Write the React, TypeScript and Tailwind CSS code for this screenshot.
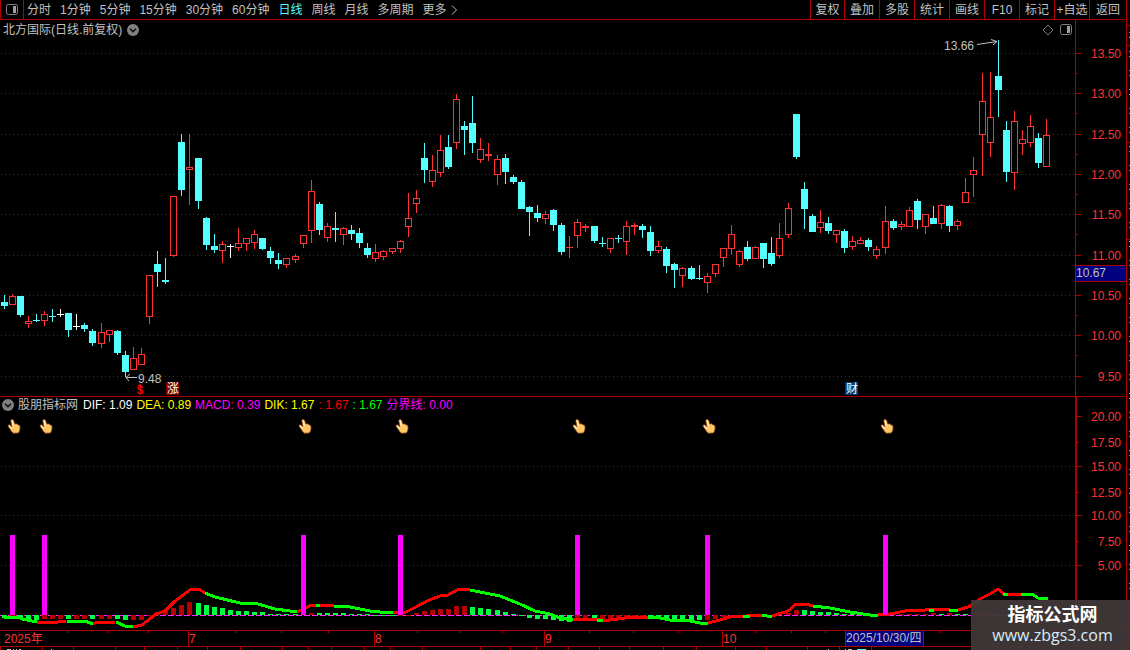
import React from 'react';
import clsx from 'clsx';

type Tone = 'up' | 'down' | 'flat';
type Candle = [string, number, number, number, number];

// [tone, high, body top, body bottom, low]  r = up, c = down, w = unchanged
const candles: Candle[] = [
  ['c', 295, 302, 306, 309], ['r', 294, 296, 305, 305], ['c', 296, 296, 315, 317], ['r', 316, 321, 324, 328],
  ['c', 314, 320, 321, 322], ['r', 311, 314, 321, 326], ['c', 309, 316, 317, 322], ['w', 309, 314, 315, 317],
  ['c', 313, 313, 330, 337], ['w', 314, 326, 327, 330], ['c', 323, 325, 329, 332], ['c', 329, 331, 343, 346],
  ['r', 323, 332, 344, 348], ['r', 330, 330, 335, 342], ['c', 330, 331, 353, 355], ['c', 351, 355, 372, 377],
  ['r', 347, 358, 370, 370], ['r', 348, 354, 365, 365], ['r', 275, 275, 317, 324], ['c', 251, 264, 272, 287],
  ['c', 258, 280, 282, 284], ['r', 196, 196, 256, 257], ['c', 134, 142, 190, 196], ['r', 134, 167, 170, 205],
  ['c', 158, 158, 201, 209], ['c', 217, 218, 245, 250], ['c', 234, 246, 250, 253], ['r', 241, 244, 251, 263],
  ['w', 244, 246, 247, 258], ['r', 228, 243, 248, 251], ['r', 238, 238, 244, 251], ['r', 230, 234, 243, 249],
  ['c', 238, 238, 249, 250], ['c', 247, 251, 258, 264], ['c', 253, 260, 264, 269], ['r', 258, 258, 265, 268],
  ['r', 254, 256, 260, 263], ['r', 235, 235, 244, 248], ['r', 180, 191, 231, 243], ['c', 202, 204, 230, 235],
  ['r', 223, 226, 238, 242], ['c', 212, 228, 230, 242], ['r', 227, 228, 235, 245], ['c', 225, 230, 234, 240],
  ['c', 228, 233, 243, 248], ['c', 243, 248, 255, 258], ['r', 244, 252, 259, 262], ['r', 250, 251, 257, 260],
  ['r', 248, 248, 252, 254], ['r', 240, 241, 249, 253], ['r', 193, 218, 227, 237], ['r', 190, 198, 204, 213],
  ['c', 143, 158, 170, 183], ['r', 155, 170, 182, 187], ['r', 135, 150, 173, 177], ['c', 135, 147, 167, 169],
  ['r', 94, 99, 143, 149], ['c', 121, 126, 130, 155], ['c', 96, 123, 143, 153], ['r', 138, 149, 160, 163],
  ['r', 143, 154, 156, 161], ['r', 155, 159, 175, 185], ['c', 154, 158, 172, 184], ['c', 175, 177, 182, 184],
  ['c', 180, 182, 209, 209], ['c', 206, 207, 212, 236], ['c', 205, 213, 218, 222], ['r', 211, 214, 219, 224],
  ['c', 209, 210, 225, 231], ['c', 223, 225, 252, 255], ['r', 236, 247, 248, 258], ['r', 219, 222, 236, 248],
  ['r', 224, 226, 228, 232], ['c', 226, 226, 241, 243], ['c', 237, 243, 244, 247], ['r', 238, 238, 249, 253],
  ['c', 235, 238, 239, 243], ['r', 221, 226, 242, 255], ['r', 223, 225, 227, 235], ['c', 224, 226, 230, 238],
  ['c', 226, 232, 251, 256], ['r', 241, 246, 251, 253], ['c', 247, 249, 266, 273], ['c', 263, 264, 270, 288],
  ['r', 267, 268, 276, 287], ['c', 266, 268, 279, 280], ['c', 265, 278, 279, 280], ['r', 273, 276, 283, 293],
  ['r', 264, 264, 274, 277], ['r', 248, 248, 258, 267], ['r', 225, 234, 249, 255], ['r', 250, 251, 265, 267],
  ['c', 241, 247, 259, 261], ['r', 246, 247, 259, 259], ['c', 243, 243, 259, 268], ['c', 237, 253, 264, 266],
  ['r', 223, 238, 256, 258], ['r', 203, 208, 235, 238], ['c', 114, 114, 157, 159], ['c', 182, 189, 209, 229],
  ['c', 214, 216, 232, 232], ['r', 210, 222, 228, 233], ['c', 217, 223, 231, 234], ['r', 230, 230, 235, 243],
  ['c', 229, 231, 248, 253], ['r', 236, 241, 247, 250], ['r', 237, 240, 244, 244], ['c', 238, 240, 247, 251],
  ['r', 246, 249, 256, 259], ['r', 206, 221, 248, 254], ['c', 219, 221, 228, 230], ['r', 221, 224, 227, 230],
  ['r', 207, 210, 227, 227], ['c', 199, 201, 220, 229], ['r', 214, 214, 227, 234], ['c', 206, 218, 224, 224],
  ['r', 204, 205, 224, 229], ['c', 205, 206, 226, 232], ['r', 219, 221, 226, 230], ['r', 178, 192, 203, 203],
  ['r', 157, 170, 175, 197], ['r', 73, 101, 135, 176], ['r', 72, 117, 143, 157], ['c', 40, 76, 90, 117],
  ['c', 121, 130, 172, 182], ['r', 111, 121, 173, 190], ['r', 130, 139, 144, 155], ['r', 115, 126, 143, 147],
  ['c', 133, 138, 163, 168], ['r', 119, 135, 167, 167],
];

// one entry per candle, "g" or "r" followed by the bar height, negative hangs below zero
const macd = (
  'g-3 r-3 g-4 g-4 g-5 r-4 r-4 r-4 g-4 r-4 r-4 g-4 r-4 r-4 g-4 g-5 r-5 r-5 r-1 r3 r4 r7 r10 r13 ' +
  'g12 g10 g8 g7 g5 g4 g4 g3 g3 g1 g1 g1 g1 r1 r2 g2 g2 g2 g2 g1 g1 g1 g-1 g-1 g-1 r-1 r-1 r2 r4 r5 r6 r6 r9 r9 ' +
  'g8 g7 g6 g5 g3 g1 g-1 g-3 g-4 g-4 g-5 g-6 g-7 r-6 r-5 g-5 r-6 r-5 r-5 r-4 r-3 r-3 g-3 g-3 g-4 g-5 g-5 g-6 g-5 ' +
  'r-5 r-4 r-2 r-1 r-1 g-1 r1 g1 g-1 r1 r2 r5 g5 g4 g3 g3 g2 g1 g1 g1 g-1 g-1 r1 r1 r1 r1 r1 r1 r2 g1 r2 g1 g1 r2 r3'
).split(' ');

const difLine: [Tone, string][] = [
  ['down', '4,617 18,617 22,619 37,622'],
  ['up', '37,622 58,622 60,621 66,621'],
  ['down', '67,621 85,621 93,624'],
  ['up', '93,624 97,622 115,622'],
  ['down', '116,622 125,626 134,627'],
  ['up', '133,627 142,625 156,614 165,611 174,602 190,590 199,589 205,593'],
  ['down', '205,593 215,597 240,603 258,604 275,609 290,611 297,612'],
  ['up', '297,612 303,609 312,605 334,606'],
  ['down', '316,605 320,605'],
  ['down', '334,606 350,607 370,611 380,612 394,612'],
  ['up', '393,612 406,612 416,607 427,601 440,596 448,595 457,590 470,589'],
  ['down', '470,590 475,591 500,596 520,604 535,611 550,614 560,618 573,620'],
  ['up', '573,620 598,619 603,621 625,618 648,617'],
  ['down', '597,620 603,621'],
  ['down', '648,617 660,618 670,620 690,621 700,623 708,623'],
  ['up', '708,623 720,620 730,617 762,615'],
  ['down', '743,616 750,617'],
  ['down', '762,615 772,617'],
  ['up', '772,616 788,611 796,604 806,604 813,606'],
  ['down', '813,606 830,608 850,612 870,615 878,616'],
  ['up', '878,615 890,614 905,611 925,610 945,609 950,610 958,610 971,606 980,599 990,594 998,589 1004,594 1022,594'],
  ['down', '929,610 934,610'],
  ['down', '949,610 958,611'],
  ['down', '1003,594 1008,594'],
  ['down', '1021,594 1032,594 1038,598 1048,598'],
];

const signalBars = [1, 5, 37, 49, 71, 87, 109];

const priceScale = [
  { y: 53, label: '13.50' }, { y: 93, label: '13.00' }, { y: 134, label: '12.50' },
  { y: 174, label: '12.00' }, { y: 214, label: '11.50' }, { y: 255, label: '11.00' },
  { y: 295, label: '10.50' }, { y: 335, label: '10.00' }, { y: 376, label: '9.50' },
];

const indicatorScale = [
  { y: 416, label: '20.00' }, { y: 442, label: '17.50' }, { y: 466, label: '15.00' },
  { y: 492, label: '12.50' }, { y: 515, label: '10.00' }, { y: 541, label: '7.50' },
  { y: 565, label: '5.00' },
];

const periods = ['分时', '1分钟', '5分钟', '15分钟', '30分钟', '60分钟', '日线', '周线', '月线', '多周期'];
const tools = ['复权', '叠加', '多股', '统计', '画线', 'F10', '标记', '+自选', '返回'];

const readings = [
  { text: 'DIF: 1.09', color: 'text-white' },
  { text: 'DEA: 0.89', color: 'text-[#ffff00]' },
  { text: 'MACD: 0.39', color: 'text-[#ff00ff]' },
  { text: 'DIK: 1.67', color: 'text-[#ffff00]' },
  { text: ': 1.67', color: 'text-[#ff0000]' },
  { text: ': 1.67', color: 'text-[#00ff00]' },
  { text: '分界线: 0.00', color: 'text-[#ff00ff]' },
];

const months = [
  { x: 188, label: '7' }, { x: 374, label: '8' }, { x: 544, label: '9' }, { x: 722, label: '10' },
];
const weekTicks = [67, 108, 148, 235, 281, 328, 417, 459, 502, 589, 633, 678, 756, 791, 825, 940];
const footerTicks = [0, 42, 73, 115, 144, 177, 207, 240, 282, 308, 331, 364, 390, 422, 480, 510, 536, 568, 599, 629, 663, 696, 735, 766, 807, 839, 871];

const candleX = (i: number) => Math.floor(4.037 + i * 8.08264);

const PanelIcon = () => (
  <svg width="13" height="12" viewBox="0 0 13 12" className="block">
    <rect x="0.5" y="0.5" width="11" height="10" rx="2" fill="none" stroke="#808080" />
    <rect x="7" y="2" width="3" height="7" fill="#a0a0a0" />
  </svg>
);

const ChevronBadge = () => (
  <svg width="12" height="12" viewBox="0 0 12 12" className="block">
    <circle cx="6" cy="6" r="6" fill="#808080" />
    <path d="M3 4.8 L6 7.6 L9 4.8" fill="none" stroke="#101010" strokeWidth="1.5" />
  </svg>
);

const Hand = ({ x, y }: { x: number; y: number }) => (
  <g transform={`translate(${x} ${y})`}>
    <path
      d="M5 1.5C6 1.5 6.6 2 6.9 3L7.8 6L9.5 5.8L11 6.8L12.3 7.3C13 8 13.2 9 13 10.5C12.9 12 12.4 13.5 11.3 15L6.3 15.2C4.5 14 3.2 11.2 1.3 8.6C0.6 7.4 1.6 6.4 2.7 7.1L4.8 8.8L3.9 3.2C3.7 2.2 4.1 1.5 5 1.5Z"
      fill="#ffc864"
      stroke="#8a4413"
      strokeWidth="0.8"
    />
    <path d="M5 2.4L6.4 8M2 7.7L4.6 10.6" stroke="#fff3dc" strokeWidth="1.1" fill="none" />
  </g>
);

const Grid = ({ rows }: { rows: number[] }) => (
  <>
    {rows.map((y) => (
      <line key={y} x1="1" x2="100%" y1={y + 0.5} y2={y + 0.5} stroke="#a80000" strokeDasharray="1 3" />
    ))}
  </>
);

const CandleShape = ({ index, candle }: { index: number; candle: Candle }) => {
  const [tone, high, top, bottom, low] = candle;
  const x = candleX(index);
  const hollow = tone === 'r' && bottom - top > 2;
  const color = tone === 'r' ? '#ff3232' : tone === 'c' ? '#54ffff' : '#ffffff';
  return (
    <g fill={color}>
      {top > high && <rect x={x} y={high} width="1" height={top - high} />}
      {low > bottom && <rect x={x} y={bottom} width="1" height={low - bottom} />}
      {hollow ? (
        <rect x={x - 2.5} y={top + 0.5} width="6" height={bottom - top - 1} fill="#000000" stroke={color} />
      ) : (
        <rect x={x - 3} y={top} width="7" height={bottom - top} />
      )}
    </g>
  );
};

const Toolbar = () => (
  <header className="flex h-5 items-stretch justify-between border-b border-[#b00000]">
    <div className="flex items-center">
      <button aria-label="面板" className="flex h-full w-6 items-center justify-center border-x border-[#b00000]">
        <PanelIcon />
      </button>
      <nav className="flex items-center gap-[9px] pl-[3px]">
        {periods.map((p) => (
          <button key={p} className={clsx('whitespace-nowrap', p === '日线' ? 'text-[#54ffff]' : 'text-[#c0c0c0]')}>
            {p}
          </button>
        ))}
        <button className="flex items-center gap-1 whitespace-nowrap">
          更多
          <svg width="7" height="10" viewBox="0 0 7 10">
            <path d="M1 0.5L5.5 5L1 9.5" fill="none" stroke="#c0c0c0" />
          </svg>
        </button>
      </nav>
    </div>
    <div className="flex">
      {tools.map((t) => (
        <button
          key={t}
          className="w-[35px] whitespace-nowrap border-l border-[#b00000] text-center first:w-[34px] last:w-[37px]"
        >
          {t}
        </button>
      ))}
    </div>
  </header>
);

const PricePanel = () => (
  <section className="flex border-b border-[#b00000]">
    <div className="min-w-0 flex-1">
      <div className="flex h-5 items-center justify-between pl-[3px] pr-[2px]">
        <h1 className="flex items-center gap-[5px]">
          北方国际(日线.前复权)
          <ChevronBadge />
        </h1>
        <div className="flex items-center gap-[6px]">
          <svg width="12" height="12" viewBox="0 0 12 12">
            <path d="M6 1L11 6L6 11L1 6Z" fill="none" stroke="#808080" />
          </svg>
          <PanelIcon />
        </div>
      </div>
      <svg className="block h-[356px] w-full overflow-visible" role="img" aria-label="日线 K线图">
        <g transform="translate(0 -40)">
          <Grid rows={priceScale.map((p) => p.y)} />
          {candles.map((c, i) => (
            <CandleShape key={i} index={i} candle={c} />
          ))}
          {/* high and low callouts */}
          <g fill="none" stroke="#c0c0c0">
            <path d="M977 44.5L997 41.5M991 39.5L997 41.5L993 45" />
            <path d="M137 377.5H126M130 374L126 377.5L129 381" />
          </g>
          <g fill="#c0c0c0">
            <text x="944" y="50">13.66</text>
            <text x="138" y="383">9.48</text>
          </g>
          {/* event markers */}
          <text x="137" y="394" fill="#ff0000" fontSize="11" fontWeight="bold">$</text>
          <path d="M137 386L140 384L143 386Z" fill="#ff0000" />
          <rect x="166" y="382" width="13" height="13" fill="#800000" />
          <text x="167" y="393" fill="#ffffff">涨</text>
          <rect x="845" y="382" width="13" height="13" fill="#003c78" />
          <text x="846" y="393" fill="#ffffff">财</text>
        </g>
      </svg>
    </div>
    <svg className="block h-[376px] w-[51px] shrink-0 border-l border-[#b00000]">
      <g transform="translate(0 -20)">
        {priceScale.map((p) => (
          <React.Fragment key={p.label}>
            <rect x="0" y={p.y} width="5" height="1" fill="#b00000" />
            <rect x="0" y={p.y + 20} width="2" height="1" fill="#b00000" />
            <text x="45" y={p.y + 5} textAnchor="end" fill="#ff3232">{p.label}</text>
          </React.Fragment>
        ))}
        <rect x="0" y="265" width="50" height="17" fill="#b00000" />
        <rect x="0" y="266" width="50" height="15" fill="#000080" />
        <text x="0" y="277" fill="#c0c0c0">10.67</text>
      </g>
    </svg>
  </section>
);

const IndicatorPanel = () => (
  <section className="flex border-b border-[#b00000]">
    <div className="min-w-0 flex-1">
      <div className="flex h-4 items-center gap-1 whitespace-nowrap pl-[2px]">
        <ChevronBadge />
        <h2 className="mr-px">股朋指标网</h2>
        {readings.map((r, i) => (
          <span key={i} className={r.color}>{r.text}</span>
        ))}
      </div>
      <svg className="block h-[217px] w-full" role="img" aria-label="股朋指标网">
        <g transform="translate(0 -413)">
          <Grid rows={[466, 515, 565]} />
          <line x1="0" x2="100%" y1="615.5" y2="615.5" stroke="#ff28ff" strokeDasharray="6 2" />
          {macd.map((m, i) => {
            const h = Number(m.slice(1));
            return (
              <rect
                key={i}
                x={candleX(i) - 2}
                y={h > 0 ? 615 - h : 615}
                width="5"
                height={Math.abs(h)}
                fill={m[0] === 'g' ? '#00ff40' : '#b40000'}
              />
            );
          })}
          {difLine.map(([tone, points], i) => (
            <polyline
              key={i}
              points={points}
              fill="none"
              stroke={tone === 'up' ? '#ff0000' : '#00ff00'}
              strokeWidth="3"
              strokeLinejoin="round"
              shapeRendering="crispEdges"
            />
          ))}
          {signalBars.map((i) => (
            <React.Fragment key={i}>
              <rect x={candleX(i) - 2} y="535" width="5" height="80" fill="#ff00ff" />
              <Hand x={candleX(i) - 5} y={418} />
            </React.Fragment>
          ))}
        </g>
      </svg>
    </div>
    <svg className="block h-[233px] w-[51px] shrink-0 border-l-2 border-[#b00000]">
      <g transform="translate(0 -397)">
        {indicatorScale.map((p, i) => (
          <React.Fragment key={p.label}>
            <rect x="0" y={p.y} width={i % 2 ? 2 : 5} height="1" fill="#b00000" />
            <text x="44" y={p.y + 5} textAnchor="end" fill="#ff3232">{p.label}</text>
          </React.Fragment>
        ))}
      </g>
    </svg>
  </section>
);

const DateAxis = () => (
  <svg className="block h-4 w-full border-b border-[#b00000]">
    {weekTicks.map((x) => (
      <rect key={x} x={x} y="0" width="1" height="2" fill="#b00000" />
    ))}
    <text x="4" y="12" fill="#ff3232">2025年</text>
    {months.map((m) => (
      <React.Fragment key={m.label}>
        <rect x={m.x} y="0" width="1" height="15" fill="#b00000" />
        <text x={m.x + 1} y="12" fill="#ff3232">{m.label}</text>
      </React.Fragment>
    ))}
    <rect x="845" y="0" width="79" height="15" fill="#b00000" />
    <rect x="846" y="0" width="77" height="15" fill="#000080" />
    <text x="846" y="11" fill="#c0c0c0">2025/10/30/四</text>
  </svg>
);

export default function App() {
  return (
    <div className="relative flex overflow-hidden bg-black text-xs leading-4 text-[#c0c0c0] [font-family:'Liberation_Sans','Noto_Sans_CJK_SC',sans-serif]">
      <main className="min-w-0 flex-1">
        <Toolbar />
        <PricePanel />
        <IndicatorPanel />
        <DateAxis />
        <svg className="block h-[3px] w-full">
          {footerTicks.map((x) => (
            <rect key={x} x={x} y="0" width="1" height="3" fill="#b00000" />
          ))}
          <path d="M7 2.5H11M13 2.5H14M16 2.5H17M19 2.5H21M51 2.5H52M828 2.5H829M845 2.5H846M848 2.5H852" stroke="#c0c0c0" />
          <path d="M857 2.5H866" stroke="#54ffff" />
        </svg>
      </main>

      {/* edge of the quote column */}
      <svg className="block w-1 shrink-0 self-stretch border-l border-[#b00000]">
        {[25, 45, 142, 239].map((y) => (
          <rect key={y} x="0" y={y} width="3" height="1" fill="#b00000" />
        ))}
        <line x1="2.5" x2="2.5" y1="32" y2="590" stroke="#909090" strokeDasharray="1 4 1 13" />
      </svg>

      <aside className="absolute bottom-0 right-0 flex h-[50px] w-[159px] flex-col items-center justify-center bg-[#403838]/95 pl-1">
        <strong className="text-lg font-bold leading-5 text-white">指标公式网</strong>
        <a href="#" className="text-base leading-5 text-[#d8ecfa] [font-family:'Open_Sans',sans-serif]">
          www.zbgs3.com
        </a>
      </aside>
    </div>
  );
}
